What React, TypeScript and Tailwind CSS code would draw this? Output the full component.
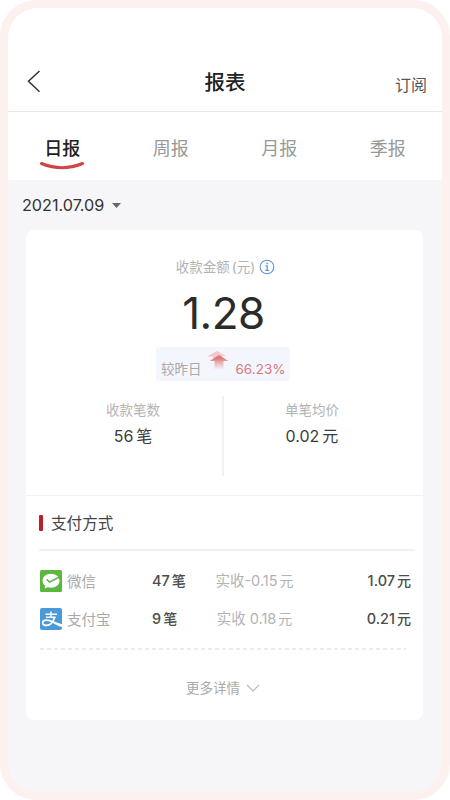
import clsx from 'clsx'

const TABS = [
  { label: '日报', active: true },
  { label: '周报', active: false },
  { label: '月报', active: false },
  { label: '季报', active: false },
]

function WechatIcon() {
  return (
    <svg className="ml-px size-[22px]" viewBox="0 0 22 22" fill="none">
      <rect width="22" height="22" rx="1.5" fill="#5ab83e" />
      <path
        d="M11 3.800c4.900 0 8.500 3 8.500 6.900s-3.600 7-8.500 7c-1.200 0-2.300-.2-3.300-.5l-3 1.300.5-2.700c-1.700-1.300-2.700-3-2.700-5.100 0-3.900 3.600-6.900 8.500-6.900z"
        fill="#fff"
      />
      <path d="M6.800 9.300l2.600 2.800L19 7.200" stroke="#5ab83e" strokeWidth="1.600" />
    </svg>
  )
}

function AlipayIcon() {
  return (
    <svg className="ml-px size-[22px]" viewBox="0 0 22 22" fill="none">
      <rect width="22" height="22" rx="2" fill="#4b99d6" />
      <path d="M11 3.500v5M5.500 6.300h11.500M6 9.300h9.500" stroke="#fff" strokeWidth="1.500" />
      <path
        d="M14.800 9c-1.300 4.200-4.100 8.400-8.300 8.400-2.300 0-3.900-1-3.900-2.600 0-1.700 1.700-2.700 3.900-2.700 4.500 0 8 3.200 15.500 5.500"
        stroke="#fff"
        strokeWidth="1.800"
      />
      <path d="M12.500 13.300l9.500 3v2.700c-4-1-7-2.700-9.800-4.500z" fill="#fff" />
    </svg>
  )
}

function InfoIcon() {
  return (
    <svg className="ml-1 size-4" viewBox="0 0 16 16" fill="none" stroke="#5b93dc">
      <circle cx="8" cy="8" r="6.800" strokeWidth="1.100" />
      <path d="M6.500 6.900h1.700v4.300M6.300 11.300h3.600" strokeWidth="1.200" />
      <circle cx="8" cy="4.500" r=".7" fill="#5b93dc" strokeWidth=".5" />
    </svg>
  )
}

function RiseIcon() {
  return (
    <svg className="h-5 w-[23px]" viewBox="0 0 23 20">
      <defs>
        <linearGradient id="rise" x1="0" y1="0" x2="0" y2="1">
          <stop offset="0.200" stopColor="#de7779" />
          <stop offset="1" stopColor="#eb9c9e" stopOpacity="0" />
        </linearGradient>
      </defs>
      <path d="M10 0l9 5h-4v4H6V5.500H0z" fill="#f0b8ba" opacity=".75" />
      <path d="M12 4l9.500 6H16.500v9h-9v-9H2.500z" fill="url(#rise)" />
    </svg>
  )
}

function Header() {
  return (
    <header className="grid h-[103px] grid-cols-3 items-end px-[15px] pb-[14px]">
      <svg className="mb-1 ml-[3px] h-6 w-4" viewBox="0 0 16 24" fill="none">
        <path d="M13.500 2L2.500 12.300l11 10.400" stroke="#333" strokeWidth="1.500" />
      </svg>
      <h1 className="text-center text-[20.500px] leading-[28px] font-medium text-[#222]">报表</h1>
      <span className="text-right text-base leading-6 text-[#555]">订阅</span>
    </header>
  )
}

function Tabs() {
  return (
    <nav className="grid h-[69px] grid-cols-4 border-t border-[#e8e8e8]">
      {TABS.map(({ label, active }) => (
        <div
          key={label}
          className={clsx(
            'flex flex-col items-center pt-[23px] text-lg leading-[27px]',
            active ? 'font-medium text-[#222]' : 'text-[#999]',
          )}
        >
          {label}
          {active && (
            <svg className="-mt-px h-[10px] w-[46px]" viewBox="0 0 46 10" fill="none">
              <path d="M2.500 2.500Q23 11 43.500 2.500" stroke="#cf4545" strokeWidth="3" strokeLinecap="round" />
            </svg>
          )}
        </div>
      ))}
    </nav>
  )
}

function Stat({ label, value, unit }: { label: string; value: string; unit: string }) {
  return (
    <div className="flex flex-col items-center pt-1">
      <span className="text-[13.500px] leading-5 text-[#b3b3b3]">{label}</span>
      <span className="mt-0.5 text-base leading-7 text-[#3c3c3c]">
        {value}
        <span className="ml-[3px]">{unit}</span>
      </span>
    </div>
  )
}

function Payment({ icon, name, count, received, total }: {
  icon: React.ReactNode
  name: string
  count: string
  received: string
  total: string
}) {
  return (
    <li className="grid h-[38px] grid-cols-[28px_85px_53px_99px_1fr] items-center text-[14.500px]">
      {icon}
      <span className="pt-px text-[#aaa]">{name}</span>
      <span className="font-medium text-[#4c4c4c]">
        {count}
        <span className="ml-0.5 text-[14px]">笔</span>
      </span>
      <span className="text-center text-[14.500px] text-[#b3b3b3]">
        {received}
        <span className="ml-0.5 text-[14px]">元</span>
      </span>
      <span className="text-right font-medium text-[#4c4c4c]">
        {total}
        <span className="ml-0.5 text-[14px]">元</span>
      </span>
    </li>
  )
}

export default function App() {
  return (
    <div className="h-[800px] w-[450px] bg-white font-['Inter','Noto_Sans_CJK_SC',sans-serif]">
      <div className="h-full rounded-[36px] bg-[#fdf1f0] p-2">
        <main className="h-full overflow-hidden rounded-[30px] bg-[#f6f6f9]">
          <div className="bg-white">
            <Header />
            <Tabs />
          </div>
          <div className="flex h-[50px] items-center pl-[14px] text-[16.200px] text-[#333]">
            <span>2021.07.09</span>
            <svg className="ml-2 h-[5px] w-[9px]" viewBox="0 0 9 5">
              <path d="M0 0h9L4.500 5z" fill="#666" />
            </svg>
          </div>
          <section className="ml-[18px] h-[490px] w-[397px] rounded-lg bg-white">
            <div className="h-[266px] border-b border-[#f2f2f2]">
              <div className="flex items-center justify-center pt-[27px] pl-0.5 text-[13.500px] leading-5 text-[#b3b3b3]">
                收款金额<span className="ml-0.5">(元)</span>
                <InfoIcon />
              </div>
              <p className="mt-3 pr-0.5 text-center text-[44px] leading-[48px] tracking-[-0.500px] text-[#2b2b2b]">1.28</p>
              <div className="mt-[10px] ml-[130px] flex h-[34px] w-[134px] rounded bg-[#f3f6fd] pt-1 pl-[5px]">
                <span className="mt-2 text-[13.500px] leading-5 text-[#aaa]">较昨日</span>
                <span className="ml-[5px]"><RiseIcon /></span>
                <span className="mt-2 ml-1.5 text-[13.500px] leading-5 text-[#d8797b]">66.23%</span>
              </div>
              <div className="mt-[15px] grid h-[80px] grid-cols-[18px_178px_2px_176px]">
                <span />
                <Stat label="收款笔数" value="56" unit="笔" />
                <span className="bg-[#f2f2f4]" />
                <Stat label="单笔均价" value="0.02" unit="元" />
              </div>
            </div>
            <div className="pr-2 pl-[13px]">
              <h2 className="flex h-[55px] items-center border-b-2 border-[#f0f0f0] text-[15.600px] text-[#444]">
                <span className="mr-2 h-4 w-1 rounded-[1px] bg-[#bd1e2c]" />
                <span className="pt-0.5">支付方式</span>
              </h2>
              <ul className="h-[97px] pt-[11px] pr-1">
                <Payment icon={<WechatIcon />} name="微信" count="47" received="实收-0.15" total="1.07" />
                <Payment icon={<AlipayIcon />} name="支付宝" count="9" received="实收 0.18" total="0.21" />
              </ul>
              <hr className="mr-[9px] ml-px h-0.5 border-0 bg-[repeating-linear-gradient(90deg,#ebebeb_0_4px,transparent_4px_7px)]" />
              <div className="mt-7 flex items-center justify-center pr-2 text-[13.500px] leading-5 text-[#aaa]">
                更多详情
                <svg className="ml-1.5 h-2 w-[14px]" viewBox="0 0 14 8" fill="none">
                  <path d="M1 1l6 6 6-6" stroke="#bbb" strokeWidth="1.200" />
                </svg>
              </div>
            </div>
          </section>
        </main>
      </div>
    </div>
  )
}
